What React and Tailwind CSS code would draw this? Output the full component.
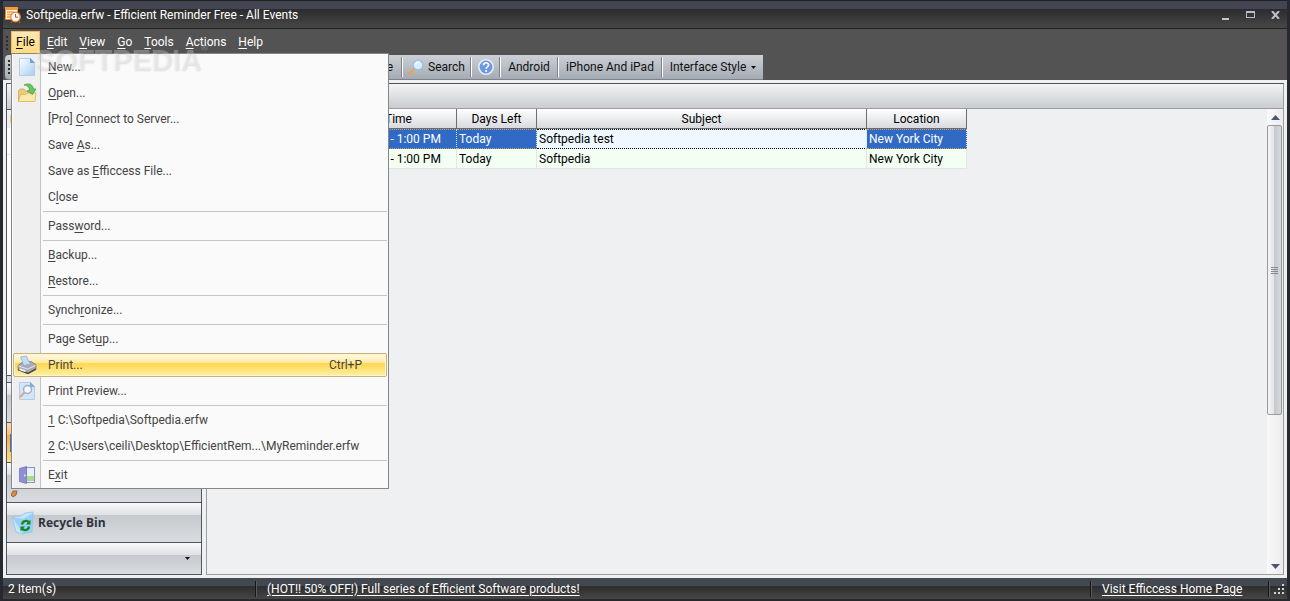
import React from 'react';

const FILE_MENU = [
  { label: '&New...', icon: NewIcon },
  { label: '&Open...', icon: OpenIcon },
  { label: '[Pro] &Connect to Server...' },
  { label: 'Save &As...' },
  { label: 'Save as &Efficcess File...' },
  { label: 'C&lose' },
  null,
  { label: 'Pass&word...' },
  null,
  { label: '&Backup...' },
  { label: '&Restore...' },
  null,
  { label: 'Synch&ronize...' },
  null,
  { label: 'Page Set&up...' },
  { label: 'Print...', icon: PrinterIcon, shortcut: 'Ctrl+P', active: true },
  { label: 'Print Preview...', icon: PreviewIcon },
  null,
  { label: '&1 C:\\Softpedia\\Softpedia.erfw' },
  { label: '&2 C:\\Users\\ceili\\Desktop\\EfficientRem...\\MyReminder.erfw' },
  null,
  { label: 'E&xit', icon: ExitIcon },
];

const MENUS = ['&Edit', '&View', '&Go', '&Tools', '&Actions', '&Help'];

const EVENTS = [
  { time: '9:00 AM - 1:00 PM', left: 'Today', subject: 'Softpedia test', location: 'New York City', selected: true },
  { time: '9:00 AM - 1:00 PM', left: 'Today', subject: 'Softpedia', location: 'New York City' },
];

// "&" marks the underlined access key
const Accel = ({ text }) => {
  const i = text.indexOf('&');
  if (i < 0) return <span>{text}</span>;
  return (
    <span>
      {text.slice(0, i)}
      <u className="underline underline-offset-2">{text[i + 1]}</u>
      {text.slice(i + 2)}
    </span>
  );
};

function AppIcon() {
  return (
    <svg className="w-4 h-4" viewBox="0 0 16 16">
      <rect x="0.5" y="0.5" width="12" height="12" fill="#fff4e0" stroke="#f08a24" />
      <path d="M0 0h13v3H0z" fill="#f59a35" />
      <path d="M2 5h7M2 7.5h4M2 10h3" stroke="#f0a050" strokeWidth="1.3" />
      <circle cx="10.5" cy="10" r="4.8" fill="#f7f7f7" stroke="#e97f2a" strokeWidth="1.3" />
      <path d="M10.5 7v3.2H13" stroke="#8a6a4a" fill="none" />
      <path d="M7 14.5l-1 1.3M14 14.5l1 1.3" stroke="#e97f2a" />
    </svg>
  );
}

function NewIcon() {
  return (
    <svg className="w-5 h-5" viewBox="0 0 20 20">
      <defs>
        <linearGradient id="page" x1="0" y1="0" x2="1" y2="1">
          <stop offset="0" stopColor="#fdfeff" />
          <stop offset="1" stopColor="#a9cdf3" />
        </linearGradient>
      </defs>
      <path d="M2.5 1.5h11l4 4v13h-15z" fill="url(#page)" stroke="#b4cbe4" />
      <path d="M13 1l5 5h-5z" fill="#6f9fd8" />
    </svg>
  );
}

function OpenIcon() {
  return (
    <svg className="w-5 h-5" viewBox="0 0 20 20">
      <path d="M1.500 18V8l1.500-2h4l1.500 2H16v10z" fill="#eccb78" stroke="#d0a650" strokeWidth="0.8" />
      <path d="M1.500 18.500l2-7h5l2-1.500h8.500l-1 8.500z" fill="#fbe9ab" stroke="#d9b45c" strokeWidth="0.8" />
      <path d="M7 2c5-2.500 9-.5 9.500 4H19l-3.500 5.500L10 8l2.500-.5C12.500 4 10.500 2.500 7 2z" fill="#66c55c" stroke="#3f9f44" strokeWidth="0.7" />
    </svg>
  );
}

function PrinterIcon() {
  return (
    <svg className="w-5 h-5" viewBox="0 0 20 20">
      <path d="M1 10.500l4-3 9-1 5 3v4.500l-8 4.500-10-4z" fill="#a9abb2" stroke="#77787f" strokeWidth="0.8" />
      <path d="M3.500 2l6-1 1 3 3 5-7 1.500-1-4z" fill="#c4dcfa" stroke="#86aee0" strokeWidth="0.8" />
      <path d="M1.500 11l9 3 8-3.500" stroke="#e8e8ec" fill="none" />
      <path d="M1 14.500l10 4 8-4.500" stroke="#4a4b50" strokeWidth="1.500" fill="none" />
      <path d="M3 13.500l6 2-1 1.500-6-2z" fill="#f5f5f8" />
    </svg>
  );
}

function PreviewIcon() {
  return (
    <svg className="w-5 h-5" viewBox="0 0 20 20">
      <path d="M2.500 1.500h11l4 4v13h-15z" fill="#d5e6f9" stroke="#b4cde8" />
      <path d="M13 1l5 5h-5z" fill="#7fa9dc" />
      <path d="M3.500 15.500L7 12" stroke="#dba890" strokeWidth="2.400" strokeLinecap="round" />
      <circle cx="10.500" cy="8.500" r="4" fill="#f1f8ff" stroke="#9db0c8" strokeWidth="1.500" />
    </svg>
  );
}

function ExitIcon() {
  return (
    <svg className="w-5 h-5" viewBox="0 0 20 20">
      <rect x="9" y="2.500" width="8.500" height="15" fill="#e8eefa" stroke="#8b8fcb" />
      <path d="M10 11h7v5h-7z" fill="#a6de84" />
      <path d="M2.500 3.500l7-2v17l-7-2z" fill="#8f8dd3" stroke="#7472ba" strokeWidth="0.8" />
      <circle cx="8" cy="10.500" r="0.900" fill="#e8e8ff" />
    </svg>
  );
}

function SearchIcon() {
  return (
    <svg className="w-4 h-4" viewBox="0 0 16 16">
      <path d="M1.200 14.800L6 10" stroke="#f0a34c" strokeWidth="2.400" strokeLinecap="round" />
      <circle cx="10" cy="6" r="4.900" fill="#d4f0ff" stroke="#9cb9e0" strokeWidth="1.300" />
      <path d="M7.500 5.500C8 4 9.500 3.200 11 3.500" stroke="#fff" strokeWidth="1.300" fill="none" />
    </svg>
  );
}

function HelpIcon() {
  return (
    <svg className="w-4 h-4" viewBox="0 0 16 16">
      <circle cx="8" cy="8" r="7.200" fill="#6d98e0" stroke="#e3ecf9" strokeWidth="1.600" />
      <path d="M5.500 6.200C5.500 3 10.600 3 10.600 6c0 1.800-2.500 1.900-2.500 3.800" stroke="#fff" strokeWidth="1.700" fill="none" />
      <circle cx="8.100" cy="12" r="1.100" fill="#fff" />
    </svg>
  );
}

function RecycleIcon() {
  return (
    <svg className="w-6 h-6" viewBox="0 0 24 24">
      <path d="M1 6l9-1 4-3 8-1-1 20-10 2-6-2z" fill="#c6e5fa" stroke="#8cc6ee" strokeWidth="0.8" />
      <path d="M1 6l11 2 10-6-1.500 19-8.500 1.500z" fill="#6fb9f0" opacity="0.5" />
      <path d="M11 13.500c.5-4 5-4.500 7-2M18 15.500c-.5 4-5 4.500-7 2" stroke="#0d8a20" strokeWidth="2.300" fill="none" />
      <path d="M19.500 8.500v5H15zM9.500 20.500v-5H14z" fill="#0d8a20" />
    </svg>
  );
}

const DownArrow = () => (
  <svg className="w-[5px] h-[3px]" viewBox="0 0 5 3">
    <path d="M0 0h5L2.500 3z" fill="#111" />
  </svg>
);

const Grip = () => (
  <svg className="w-1 h-4 shrink-0" viewBox="0 0 4 16">
    <path d="M1 1h2v2H1zM1 5h2v2H1zM1 9h2v2H1zM1 13h2v2H1z" fill="#2c2c2c" />
  </svg>
);

const FileMenu = () => (
  <div
    role="menu"
    className="absolute z-20 top-full left-0 w-[378px] border border-[#868686] bg-[linear-gradient(to_right,#fafafa_1px,#efefef_1px,#efefef_28px,#c5c5c5_28px,#c5c5c5_29px,#fafafa_29px)] text-[#444]"
  >
    {FILE_MENU.map((item, i) =>
      item === null ? (
        <div key={i} role="separator" className="h-[3px] ml-[31px] mr-px pt-px">
          <div className="h-px bg-[#c5c5c5]" />
        </div>
      ) : (
        <div key={i} role="none" className="p-px">
          <button
            role="menuitem"
            className={`flex items-center w-full h-6 border text-left ${
              item.active
                ? 'rounded-xs border-[#c9b27c] bg-[linear-gradient(#fffbe9,#ffe9a0_40%,#ffd64f_42%,#fff0a5)] shadow-[inset_0_0_0_1px_#fff6cf]'
                : 'border-transparent'
            }`}
          >
            <span className="flex justify-center w-[26px] shrink-0">{item.icon && <item.icon />}</span>
            <span className="flex-1 pl-2 whitespace-nowrap"><Accel text={item.label} /></span>
            {item.shortcut && <span className="pr-6">{item.shortcut}</span>}
          </button>
        </div>
      )
    )}
  </div>
);

const TitleBar = () => (
  <header className="flex items-center h-[29px] pl-0.5 pr-1.5 border-y border-[#1f2126] bg-[linear-gradient(#434553_8px,#2b2b2b_8px,#484848)] text-white">
    <AppIcon />
    <h1 className="flex-1 pl-[5px]">Softpedia.erfw - Efficient Reminder Free - All Events</h1>
    <div className="flex gap-[13px]">
      <button aria-label="Minimize" className="flex items-end justify-center w-3 h-3 pb-px">
        <span className="w-[7px] h-[2px] bg-[#c3c6ce]" />
      </button>
      <button aria-label="Maximize" className="flex items-center justify-center w-3 h-3">
        <span className="w-[9px] h-[7px] border border-t-2 border-[#b4bdcd]" />
      </button>
      <button aria-label="Close" className="flex items-center justify-center w-3 h-3">
        <svg className="w-[9px] h-2" viewBox="0 0 9 8">
          <path d="M1 0l7 8M8 0L1 8" stroke="#b9c2d2" strokeWidth="2" />
        </svg>
      </button>
    </div>
  </header>
);

const MenuBar = () => (
  <nav className="flex items-start h-[26px] pt-0.5 pl-0.5 bg-[#535353] text-white">
    <div className="w-1 pt-1 mr-0.5"><Grip /></div>
    <div className="relative mr-px">
      <button className="w-[29px] h-[22px] pb-px border border-b-0 border-[#ffb769] bg-[linear-gradient(#ffe7b0,#ffdc80)] text-black">
        <Accel text="&File" />
      </button>
      <FileMenu />
    </div>
    {MENUS.map(m => (
      <button key={m} className="h-[22px] px-1.5"><Accel text={m} /></button>
    ))}
  </nav>
);

const ToolButton = ({ children, className = '' }) => (
  <button className={`flex items-center justify-center border-r border-[#7d8187] shadow-[1px_0_0_#fff] my-0.5 mr-px whitespace-nowrap ${className}`}>
    {children}
  </button>
);

const Toolbar = () => (
  <div className="flex h-[25px] pl-0.5 bg-[#535353] text-[#111]">
    <div className="flex rounded-l-sm border-b border-[#7c838c] bg-[linear-gradient(#cdd0d5,#b9bec5_50%,#a4abb4)]">
      <div className="flex items-center w-2 pl-0.5"><Grip /></div>
      <ToolButton className="w-[389px] justify-end! pr-2">Delete</ToolButton>
      <ToolButton className="w-[68px] gap-1">
        <SearchIcon />
        Search
      </ToolButton>
      <ToolButton className="w-7"><HelpIcon /></ToolButton>
      <ToolButton className="w-[57px]">Android</ToolButton>
      <ToolButton className="w-[103px]">iPhone And iPad</ToolButton>
      <button className="flex items-center justify-center gap-[5px] w-[100px] whitespace-nowrap">
        Interface Style
        <DownArrow />
      </button>
    </div>
  </div>
);

const NAV = 'flex items-center w-full h-10 border-t border-[#505560] bg-[linear-gradient(#fafafb,#dfe1e4_12px,#c5c9cf_12px,#d9dddf)]';

const Sidebar = () => (
  <aside className="flex flex-col w-[196px] shrink-0 border border-[#505560] bg-white">
    <div className="h-[26px] border-b border-[#505560] bg-[linear-gradient(#f7f7f8,#c9ccd1)]" />
    <div className="flex items-center h-[18px] pl-[3px] bg-[#eef0f2]">
      <span className="w-4 h-2 bg-[#f5cf83]" />
    </div>
    <div className="mt-[26px] h-px bg-[#e6e8ec]" />
    <div className="flex-1" />
    <div className="h-[7px] border-t border-[#505560] bg-[#dcdfe3]" />
    <button aria-label="Calendar" className={NAV} />
    <button
      aria-label="Events"
      className="flex items-center w-full h-10 pl-[3px] border-t border-[#505560] bg-[linear-gradient(#ffd9a8,#ffbf70_12px,#ffa73d_12px,#ffe07a)]"
    >
      <span className="w-5 h-[18px] bg-[#1f7ae0]" />
    </button>
    <button aria-label="Edit" className={NAV}>
      <svg className="w-6 h-6 ml-1 mt-4" viewBox="0 0 24 24">
        <path d="M0 16l2-4h4l-1 4-3 2z" fill="#e08a3a" stroke="#8a6a50" />
      </svg>
    </button>
    <button className={`${NAV} pl-1 gap-[3px] text-[#2f343c] font-bold`}>
      <RecycleIcon />
      <span className="font-['Open_Sans',sans-serif]">Recycle Bin</span>
    </button>
    <div className="flex items-center justify-end h-8 pr-[11px] border-t border-[#505560] bg-[linear-gradient(#fafafb,#dfe1e4_12px,#c5c9cf_12px,#d9dddf)]">
      <button aria-label="Configure buttons"><DownArrow /></button>
    </div>
  </aside>
);

const TH = 'h-5 p-0 border-r border-b border-[#6d6d6d] bg-[linear-gradient(#fff,#d8dade)] font-normal';
const FOCUS = 'border-y border-dotted border-y-[#c9a26a] border-r border-r-[#e3e3e3] bg-[#316ac5] text-white';
const PLAIN = 'border-r border-b border-[#e3e6e3] bg-[#f4fff4] text-black';

const EventTable = () => (
  <table className="table-fixed w-[760px] border-separate border-spacing-0 text-black">
    <colgroup>
      <col className="w-[134px]" />
      <col className="w-[116px]" />
      <col className="w-20" />
      <col className="w-[330px]" />
      <col className="w-[100px]" />
    </colgroup>
    <thead>
      <tr>
        <th className={TH} />
        <th className={TH}>Time</th>
        <th className={TH}>Days Left</th>
        <th className={TH}>Subject</th>
        <th className={TH}>Location</th>
      </tr>
    </thead>
    <tbody>
      {EVENTS.map((e, i) => {
        const cell = `h-5 p-0 pl-0.5 whitespace-nowrap ${e.selected ? FOCUS : PLAIN}`;
        return (
          <tr key={i}>
            <td className={cell} />
            <td className={cell}>{e.time}</td>
            <td className={cell}>{e.left}</td>
            <td className={e.selected ? 'h-5 p-0 pl-0.5 border-y border-dotted border-y-black border-r border-r-[#e3e3e3] bg-[#f0f8ff]' : cell}>
              {e.subject}
            </td>
            <td className={cell}>{e.location}</td>
          </tr>
        );
      })}
    </tbody>
  </table>
);

const Scrollbar = () => (
  <div className="flex flex-col items-center w-4 shrink-0 bg-[linear-gradient(to_right,#fafafa,#ebebeb)]">
    <button aria-label="Scroll up" className="flex items-center justify-center w-4 h-4">
      <svg className="w-[9px] h-[5px]" viewBox="0 0 9 5"><path d="M4.500 0L9 5H0z" fill="#4a5878" /></svg>
    </button>
    <div className="flex-1 w-full">
      <div className="flex flex-col items-center justify-center gap-px w-[15px] h-[67%] rounded-xs border border-[#9a9a9a] bg-[linear-gradient(to_right,#f3f4f5,#e3e5e7_45%,#c6cace_50%,#d5d8db)]">
        <span className="w-[7px] h-px bg-[#858a90]" />
        <span className="w-[7px] h-px bg-[#858a90]" />
        <span className="w-[7px] h-px bg-[#858a90]" />
        <span className="w-[7px] h-px bg-[#858a90]" />
      </div>
    </div>
    <button aria-label="Scroll down" className="flex items-center justify-center w-4 h-4">
      <svg className="w-[9px] h-[5px]" viewBox="0 0 9 5"><path d="M0 0h9L4.500 5z" fill="#4a5878" /></svg>
    </button>
  </div>
);

const StatusDivider = () => <span className="w-px h-4 bg-[#161616] shadow-[1px_0_0_#5a5a5a]" />;

const StatusBar = () => (
  <footer className="flex items-center h-[23px] border-b-2 border-[#26282c] bg-[linear-gradient(#434851_8px,#2d2d2d_8px,#464646)] text-white">
    <span className="w-[252px] pl-[5px]">2 Item(s)</span>
    <StatusDivider />
    <a href="#offer" className="pl-[11px] underline underline-offset-2">(HOT!! 50% OFF!) Full series of Efficient Software products!</a>
    <span className="flex-1" />
    <StatusDivider />
    <a href="#home" className="w-[177px] pl-[11px] underline underline-offset-2">Visit Efficcess Home Page</a>
    <StatusDivider />
    <svg className="w-3 h-3 ml-1 mr-0.5" viewBox="0 0 12 12">
      <path d="M9 1h2v2H9zM5 5h2v2H5zM9 5h2v2H9zM1 9h2v2H1zM5 9h2v2H5zM9 9h2v2H9z" fill="#d5d5d5" />
    </svg>
  </footer>
);

const App = () => (
  <div className="relative flex flex-col min-h-screen border-x-[3px] border-[#26292f] bg-[#eff0f2] font-['Roboto',sans-serif] text-[12px] leading-4">
    <TitleBar />
    <MenuBar />
    <Toolbar />
    <main className="flex flex-1 gap-1 px-[3px] pt-[3px] pb-[3px]">
      <Sidebar />
      <section className="flex flex-col flex-1 min-w-0 border border-[#9a9ea3] border-t-[#535353]">
        <div className="h-[25px] bg-[linear-gradient(#f3f4f5,#c9ccd0)] border-b border-[#9a9ea3]" />
        <div className="flex flex-1">
          <div className="flex-1"><EventTable /></div>
          <Scrollbar />
        </div>
      </section>
    </main>
    <StatusBar />
    <div
      aria-hidden="true"
      className="absolute z-30 left-8 top-11 flex items-start pointer-events-none font-['Liberation_Sans',sans-serif] font-bold text-[29px] leading-8 text-white/30 [text-shadow:1px_1px_2px_rgba(0,0,0,0.12)]"
    >
      SOFTPEDIA<span className="text-[9px] leading-none">®</span>
    </div>
  </div>
);

export default App;
